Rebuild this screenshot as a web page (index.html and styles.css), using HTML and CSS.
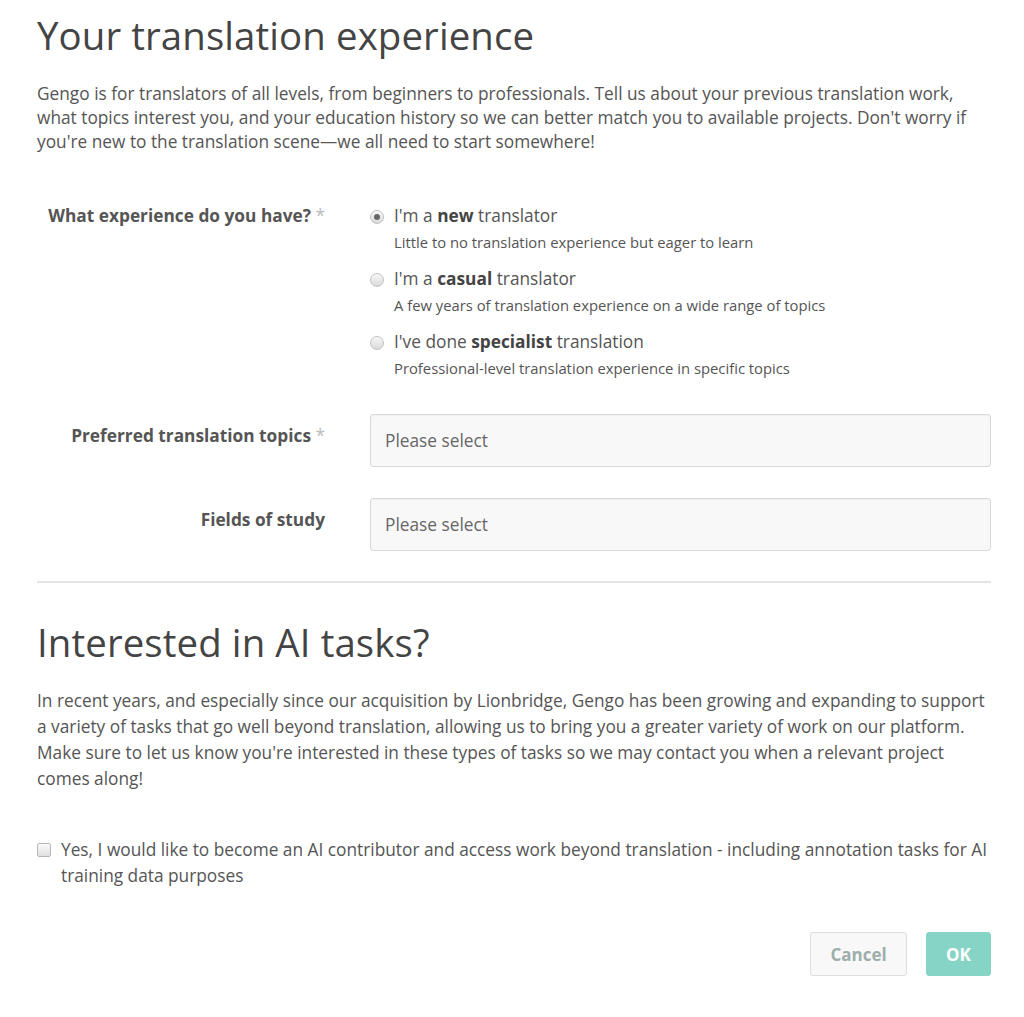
FILE: index.html
```html
<!DOCTYPE html>
<html>
<head>
<meta charset="utf-8">
<link rel="stylesheet" href="styles.css">
</head>
<body>
<div class="page">
  <h1 class="title">Your translation experience</h1>
  <p class="intro">Gengo is for translators of all levels, from beginners to professionals. Tell us about your previous translation work, what topics interest you, and your education history so we can better match you to available projects. Don't worry if you're new to the translation scene—we all need to start somewhere!</p>

  <div class="form-row exp-row">
    <div class="label">What experience do you have? <span class="req">*</span></div>
    <div class="field options">
      <div class="option">
        <span class="radio checked"></span>
        <div class="opt-text">
          <div class="opt-title">I'm a <b>new</b> translator</div>
          <div class="opt-desc">Little to no translation experience but eager to learn</div>
        </div>
      </div>
      <div class="option">
        <span class="radio"></span>
        <div class="opt-text">
          <div class="opt-title">I'm a <b>casual</b> translator</div>
          <div class="opt-desc">A few years of translation experience on a wide range of topics</div>
        </div>
      </div>
      <div class="option">
        <span class="radio"></span>
        <div class="opt-text">
          <div class="opt-title">I've done <b>specialist</b> translation</div>
          <div class="opt-desc">Professional-level translation experience in specific topics</div>
        </div>
      </div>
    </div>
  </div>

  <div class="form-row topics-row">
    <div class="label label-input">Preferred translation topics <span class="req">*</span></div>
    <div class="field"><div class="select">Please select</div></div>
  </div>

  <div class="form-row study-row">
    <div class="label label-input">Fields of study</div>
    <div class="field"><div class="select">Please select</div></div>
  </div>

  <hr class="divider">

  <h2 class="title title2">Interested in AI tasks?</h2>
  <p class="intro ai">In recent years, and especially since our acquisition by Lionbridge, Gengo has been growing and expanding to support a variety of tasks that go well beyond translation, allowing us to bring you a greater variety of work on our platform. Make sure to let us know you're interested in these types of tasks so we may contact you when a relevant project comes along!</p>

  <div class="check-row">
    <span class="checkbox"></span>
    <div class="check-text">Yes, I would like to become an AI contributor and access work beyond translation - including annotation tasks for AI training data purposes</div>
  </div>

  <div class="actions">
    <button class="btn btn-cancel">Cancel</button>
    <button class="btn btn-ok">OK</button>
  </div>
</div>
</body>
</html>
```

FILE: styles.css
```css
html, body {
  margin: 0;
  padding: 0;
  background: #fff;
}
body {
  font-family: "Open Sans", "Noto Sans", sans-serif;
  color: #555;
}
.page {
  padding: 7px 33px 0 37px;
  width: 954px;
}
.title {
  font-size: 38.4px;
  font-weight: 400;
  color: #444;
  margin: 0;
  line-height: 56px;
  letter-spacing: 0.1px;
}
.intro {
  font-size: 17.3px;
  line-height: 24px;
  margin: 19px 0 0;
  color: #555;
}
.form-row {
  display: flex;
}
.exp-row {
  margin-top: 50px;
}
.topics-row {
  margin-top: 36px;
}
.study-row {
  margin-top: 31px;
}
.label {
  width: 288px;
  text-align: right;
  font-weight: 700;
  font-size: 17.3px;
  color: #555;
  line-height: 24px;
  flex: none;
}
.label-input {
  padding-top: 10px;
}
.req {
  color: #bbb;
  font-weight: 400;
}
.field {
  margin-left: 45px;
  flex: 1;
}
.options {
  display: flex;
  flex-direction: column;
  gap: 15px;
}
.option {
  display: flex;
  align-items: flex-start;
}
.radio {
  width: 14px;
  height: 14px;
  border-radius: 50%;
  border: 1px solid #c2c2c2;
  background: linear-gradient(#f7f7f7, #dadada);
  margin: 6px 10px 0 0;
  flex: none;
  position: relative;
  box-sizing: border-box;
}
.radio.checked::after {
  content: "";
  position: absolute;
  left: 3px;
  top: 3px;
  width: 6px;
  height: 6px;
  border-radius: 50%;
  background: #666;
}
.opt-title {
  font-size: 17.3px;
  line-height: 24px;
  color: #555;
}
.opt-title b {
  color: #444;
}
.opt-desc {
  font-size: 14.8px;
  line-height: 20px;
  color: #555;
  margin-top: 4px;
}
.select {
  height: 51px;
  border: 1px solid #d9d9d9;
  border-radius: 3px;
  background: #f8f8f8;
  font-size: 17.3px;
  color: #666;
  line-height: 51px;
  padding-left: 14px;
  box-shadow: inset 0 1px 2px rgba(0,0,0,0.04);
}
.divider {
  border: 0;
  border-top: 2px solid #e4e4e4;
  margin: 30px 0 0;
}
.title2 {
  margin-top: 31px;
}
.intro.ai {
  line-height: 26px;
  margin-top: 18px;
}
.check-row {
  display: flex;
  align-items: flex-start;
  margin-top: 45px;
}
.checkbox {
  width: 14px;
  height: 14px;
  border: 1px solid #b5b5b5;
  border-radius: 2px;
  background: linear-gradient(#fafafa, #e0e0e0);
  box-sizing: border-box;
  margin: 6px 10px 0 0;
  flex: none;
}
.check-text {
  font-size: 17.3px;
  line-height: 26px;
  color: #555;
}
.actions {
  display: flex;
  justify-content: flex-end;
  gap: 19px;
  margin-top: 43px;
}
.btn {
  font-family: "Open Sans", sans-serif;
  font-weight: 700;
  font-size: 17px;
  height: 44px;
  border-radius: 3px;
  cursor: pointer;
}
.btn-cancel {
  width: 97px;
  background: #f8f8f8;
  border: 1px solid #dedede;
  color: #9eaeab;
}
.btn-ok {
  width: 65px;
  background: #86d4c5;
  border: 1px solid #86d4c5;
  color: #fff;
}
```
